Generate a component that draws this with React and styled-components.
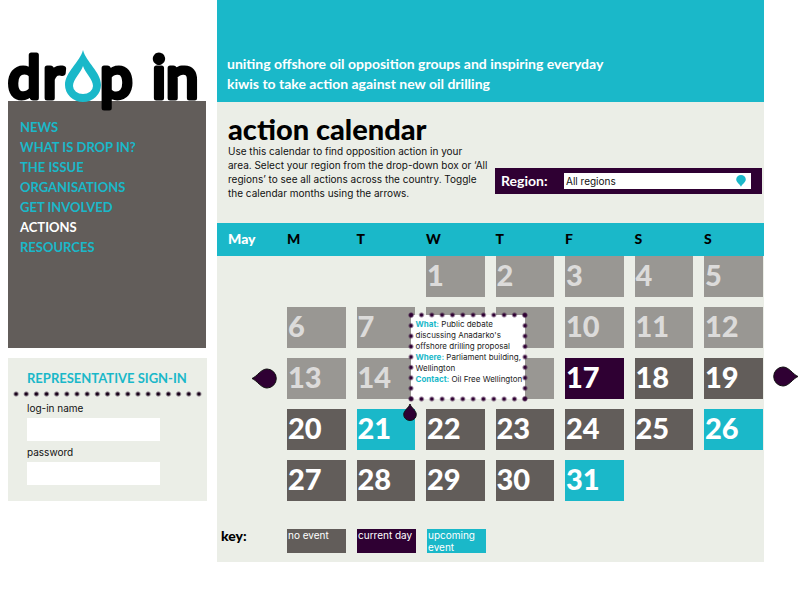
import React from "react";
import styled, { createGlobalStyle, css } from "styled-components";

const teal = "#1ab8c9";
const grey = "#625d5a";
const pale = "#ebeee7";
const plum = "#2f0033";
const round = `Lato, "Open Sans", sans-serif`;
const plain = `Inter, "Liberation Sans", Arial, sans-serif`;

const GlobalStyle = createGlobalStyle`
  *, *::before, *::after { box-sizing: border-box; }
  body { margin: 0; background: #fff; color: #111; font-family: ${plain}; font-size: 10px; line-height: 14px; }
  h1, h2, p, ul { margin: 0; padding: 0; }
  button, input, select { font: inherit; border: 0; border-radius: 0; margin: 0; }
`;

const Page = styled.div`
  display: grid;
  grid-template-columns: 199px minmax(0, 1fr);
  column-gap: 10px;
  align-items: start;
  padding: 0 36px 0 8px;
`;

const Sidebar = styled.aside`
  display: flex;
  flex-direction: column;
  padding-top: 48px;
`;

const LogoLink = styled.a`
  display: block;
  position: relative;
  height: 53px;
  svg { display: block; overflow: visible; }
`;

const Nav = styled.nav`
  margin-right: 1px;
  min-height: 247px;
  padding: 16px 12px;
  background: ${grey};
  ul { list-style: none; }
`;

const NavLink = styled.a`
  display: block;
  color: ${(p) => (p.$active ? "#fff" : teal)};
  font: 700 13px/20px ${round};
  text-decoration: none;
`;

const SignIn = styled.form`
  margin-top: 10px;
  padding: 10px 0 12px;
  background: ${pale};
`;

const SignInTitle = styled.h2`
  padding-left: 19px;
  color: ${teal};
  font: 700 13px/20px ${round};
`;

const DottedRule = styled.div`
  height: 10px;
  margin: 1px 3px 2px;
  background: radial-gradient(circle, #170019 0 1px, transparent 3px) left center / 10px 10px round no-repeat;
`;

const Field = styled.label`
  display: block;
  padding: 0 47px 4px 19px;
`;

const TextInput = styled.input`
  display: block;
  width: 100%;
  height: 23px;
  margin-top: 3px;
  padding: 0 4px;
  background: #fff;
`;

const Main = styled.main`
  background: ${pale};
  padding-bottom: 9px;
`;

const Banner = styled.header`
  display: flex;
  align-items: flex-end;
  min-height: 102px;
  padding: 0 10px 8px;
  background: ${teal};
  color: #fff;
  font: 700 14px/20px ${round};
  p { max-width: 400px; }
`;

const Intro = styled.section`
  display: flex;
  align-items: flex-end;
  justify-content: space-between;
  gap: 8px;
  padding: 12px 2px 23px 11px;
`;

const Title = styled.h1`
  color: #000;
  font: 900 29px/30px ${round};
  white-space: nowrap;
`;

const IntroText = styled.div`
  width: 259px;
  white-space: nowrap;
`;

const RegionBar = styled.label`
  display: flex;
  align-items: center;
  flex: 0 0 267px;
  height: 26px;
  margin-bottom: 6px;
  padding: 0 11px 0 6px;
  background: ${plum};
  color: #fff;
  font: 700 14px/20px ${round};
`;

const RegionName = styled.span`
  flex: 0 0 63px;
`;

const SelectBox = styled.span`
  position: relative;
  flex: 1;
  display: flex;
  svg { position: absolute; right: 5px; top: 2px; pointer-events: none; }
`;

const Select = styled.select`
  width: 100%;
  height: 16px;
  padding: 0 20px 0 2px;
  appearance: none;
  background: #fff;
  color: #111;
  font: 10px/16px ${plain};
`;

const Calendar = styled.table`
  width: 100%;
  table-layout: fixed;
  border-collapse: collapse;
  td, th { padding: 0; text-align: left; vertical-align: top; }
`;

const Col = styled.col`
  width: ${(p) => p.$w}px;
`;

const HeadCell = styled.th`
  height: 33px;
  background: ${teal};
  color: ${(p) => (p.$month ? "#fff" : "#000")};
  font: 900 14px/31px ${round};
  span { padding-left: ${(p) => (p.$month ? 11 : 0)}px; }
`;

const Cell = styled.td`
  position: relative;
`;

const tones = {
  past: css`background: #999793; color: #dcdbda;`,
  none: css`background: ${grey}; color: #fff;`,
  today: css`background: ${plum}; color: #fff;`,
  event: css`background: ${teal}; color: #fff;`,
};

const Day = styled.div`
  height: 41px;
  margin: 0 ${(p) => (p.$last ? 1 : 11)}px 10px 0;
  padding-left: 1px;
  ${(p) => tones[p.$tone]}
  font: 900 29px/37px ${round};
`;

const Arrow = styled.button`
  display: block;
  padding: 0;
  background: none;
  cursor: pointer;
  svg { display: block; }
  ${(p) =>
    p.$next
      ? css`position: absolute; left: 100%; top: 8px; margin-left: 9px;`
      : css`margin: 10px 0 0 34px;`}
`;

const Popup = styled.div`
  position: absolute;
  z-index: 1;
  left: 49px;
  bottom: 56px;
  width: 124px;
  height: 94px;
  padding: 5px;
  --dot: radial-gradient(circle, ${plum} 0 1px, transparent 3px);
  background:
    var(--dot) left top / 10px 10px round no-repeat,
    var(--dot) left bottom / 10px 10px round no-repeat,
    var(--dot) left top / 10px 10px no-repeat round,
    var(--dot) right top / 10px 10px no-repeat round,
    linear-gradient(#fff, #fff) left top / auto repeat content-box;
`;

const PopupText = styled.p`
  padding: 4px 0 0 5px;
  color: #222;
  font: 8px/11px ${plain};
  white-space: nowrap;
  b { color: ${teal}; font-weight: 700; }
`;

const Marker = styled.span`
  position: absolute;
  z-index: 2;
  left: 46px;
  top: -6px;
  svg { display: block; }
`;

const Key = styled.section`
  display: flex;
  gap: 11px;
  padding-top: 18px;
`;

const KeyTitle = styled.h2`
  flex: 0 0 59px;
  padding-left: 4px;
  color: #000;
  font: 900 14px/14px ${round};
`;

const Swatch = styled.div`
  width: 59px;
  height: 24px;
  padding-left: 1px;
  ${(p) => tones[p.$tone]}
  line-height: 12px;
  white-space: ${(p) => (p.$wrap ? "normal" : "nowrap")};
`;

const Logo = () => (
  <svg width="190" height="66" viewBox="0 0 190 66" role="img" aria-label="drop in">
    <g
      fontFamily="Lato, sans-serif"
      fontWeight="400"
      fontSize="58"
      stroke="#000"
      strokeWidth="5"
      strokeLinejoin="round"
      strokeLinecap="round"
    >
      <text x="0" y="50">d</text>
      <text x="35" y="50">r</text>
      <text x="92" y="50">p</text>
      <text x="144" y="50">i</text>
      <text x="158" y="50">n</text>
    </g>
    <path
      d="M75 2C72 14 57 24 57 37A18 17 0 0 0 93 37C93 24 78 14 75 2Z"
      fill={teal}
    />
    <path d="M75 18C73 25 65 31 65 38A10 8 0 0 0 85 38C85 31 77 25 75 18Z" fill="#fff" />
  </svg>
);

const Drop = ({ turn = 0 }) => {
  const wide = turn !== 0;
  return (
    <svg width={wide ? 26 : 14} height={wide ? 21 : 18} viewBox={wide ? "0 0 26 21" : "0 0 14 18"} aria-hidden="true">
      {wide ? (
        <path
          d="M1 10.5C6 8.5 10 1 16 1A9.3 9.5 0 0 1 16 20C10 20 6 12.5 1 10.5Z"
          transform={turn > 0 ? "translate(26 0) scale(-1 1)" : undefined}
          fill={plum}
          stroke="#111"
        />
      ) : (
        <path d="M7 1C6 4.500 .7 7.500.7 11.500A6.300 6 0 0 0 13.300 11.500C13.300 7.500 8 4.500 7 1Z" fill={plum} stroke="#111" />
      )}
    </svg>
  );
};

const navItems = ["NEWS", "WHAT IS DROP IN?", "THE ISSUE", "ORGANISATIONS", "GET INVOLVED", "ACTIONS", "RESOURCES"];
const weekdays = ["M", "T", "W", "T", "F", "S", "S"];
const upcoming = [21, 26, 31];
const today = 17;
const daysInMonth = 31;
// Days lying behind the open event details keep their tile but not their number.
const covered = [8, 9, 15, 16];
const weeks = [0, 1, 2, 3, 4].map((w) => weekdays.map((_, d) => w * 7 + d - 1));

const toneOf = (n) => (upcoming.includes(n) ? "event" : n === today ? "today" : n < today ? "past" : "none");

const EventDetails = () => (
  <>
    <Popup role="tooltip">
      <PopupText>
        <b>What:</b> Public debate<br />
        discussing Anadarko's<br />
        offshore drilling proposal<br />
        <b>Where:</b> Parliament building,<br />
        Wellington<br />
        <b>Contact:</b> Oil Free Wellington
      </PopupText>
    </Popup>
    <Marker><Drop /></Marker>
  </>
);

export default function App() {
  return (
    <>
      <GlobalStyle />
      <Page>
        <Sidebar>
          <LogoLink href="#home"><Logo /></LogoLink>
          <Nav>
            <ul>
              {navItems.map((item) => (
                <li key={item}>
                  <NavLink href="#" $active={item === "ACTIONS"}>{item}</NavLink>
                </li>
              ))}
            </ul>
          </Nav>
          <SignIn>
            <SignInTitle>REPRESENTATIVE SIGN-IN</SignInTitle>
            <DottedRule />
            <Field>log-in name<TextInput type="text" name="login" /></Field>
            <Field>password<TextInput type="password" name="password" /></Field>
          </SignIn>
        </Sidebar>
        <Main>
          <Banner>
            <p>uniting offshore oil opposition groups and inspiring everyday kiwis to take action against new oil drilling</p>
          </Banner>
          <Intro>
            <IntroText>
              <Title>action calendar</Title>
              <p>
                Use this calendar to find opposition action in your<br />
                area. Select your region from the drop-down box or ‘All<br />
                regions’ to see all actions across the country. Toggle<br />
                the calendar months using the arrows.
              </p>
            </IntroText>
            <RegionBar>
              <RegionName>Region:</RegionName>
              <SelectBox>
                <Select defaultValue="All regions"><option>All regions</option></Select>
                <svg width="10" height="12" viewBox="0 0 10 12" aria-hidden="true">
                  <path d="M5 12C4.500 9.500.2 7.500.2 4.500A4.800 4.500 0 0 1 9.800 4.500C9.800 7.500 5.500 9.500 5 12Z" fill={teal} />
                </svg>
              </SelectBox>
            </RegionBar>
          </Intro>
          <Calendar>
            <colgroup>
              <Col $w={70} />
              {weekdays.slice(1).map((_, i) => <col key={i} />)}
              <Col $w={60} />
            </colgroup>
            <thead>
              <tr>
                <HeadCell $month scope="col"><span>May</span></HeadCell>
                {weekdays.map((d, i) => <HeadCell key={i} scope="col">{d}</HeadCell>)}
              </tr>
            </thead>
            <tbody>
              {weeks.map((week, w) => (
                <tr key={w}>
                  <Cell>{w === 2 && <Arrow type="button" aria-label="Previous month"><Drop turn={-1} /></Arrow>}</Cell>
                  {week.map((n, d) => (
                    <Cell key={n}>
                      {n > 0 && n <= daysInMonth && (
                        <Day $tone={toneOf(n)} $last={d === 6}>{covered.includes(n) ? null : n}</Day>
                      )}
                      {n === 21 && <EventDetails />}
                      {w === 2 && d === 6 && <Arrow $next type="button" aria-label="Next month"><Drop turn={1} /></Arrow>}
                    </Cell>
                  ))}
                </tr>
              ))}
            </tbody>
          </Calendar>
          <Key>
            <KeyTitle>key:</KeyTitle>
            <Swatch $tone="none">no event</Swatch>
            <Swatch $tone="today">current day</Swatch>
            <Swatch $tone="event" $wrap>upcoming event</Swatch>
          </Key>
        </Main>
      </Page>
    </>
  );
}
